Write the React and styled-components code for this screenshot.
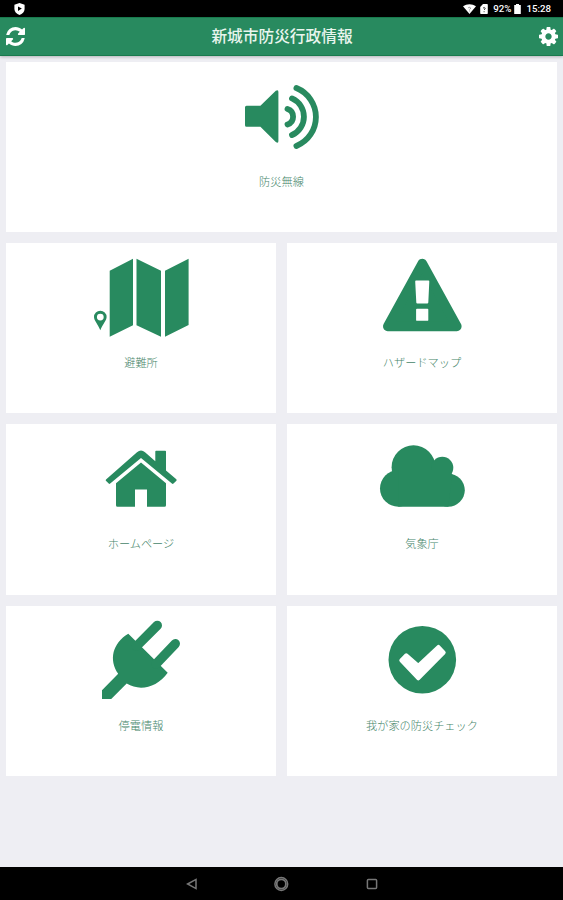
import styled, { createGlobalStyle } from "styled-components";

const GREEN = "#288a5f";

const menu = [
    { label: "防災無線", icon: <SpeakerIcon />, wide: true },
    { label: "避難所", icon: <MapIcon /> },
    { label: "ハザードマップ", icon: <WarningIcon /> },
    { label: "ホームページ", icon: <HomeIcon /> },
    { label: "気象庁", icon: <CloudIcon /> },
    { label: "停電情報", icon: <PlugIcon /> },
    { label: "我が家の防災チェック", icon: <CheckIcon /> },
];

export default function App() {
    return (
        <>
            <GlobalStyle />
            <Screen>
                <StatusBar />
                <Header>
                    <HeaderButton aria-label="更新">
                        <RefreshIcon />
                    </HeaderButton>
                    <Title>新城市防災行政情報</Title>
                    <HeaderButton aria-label="設定">
                        <CogIcon />
                    </HeaderButton>
                </Header>
                <Menu>
                    {menu.map(item => (
                        <Card key={item.label} $wide={item.wide}>
                            {item.icon}
                            <Label>{item.label}</Label>
                        </Card>
                    ))}
                </Menu>
                <NavBar />
            </Screen>
        </>
    )
}

function StatusBar() {
    return (
        <StatusRow>
            <svg width="11" height="12" viewBox="0 0 11 12">
                <path d="M5.5 0 10.6 1.8V6C10.6 8.8 8.3 10.9 5.5 12 2.7 10.9.4 8.8.4 6V1.8Z" fill="#fff" />
                <path d="M4 3.4 7.8 5.6 4 7.9Z" fill="#000" />
            </svg>
            <StatusGroup>
                <svg width="13" height="10" viewBox="0 0 13 10">
                    <path d="M0 2.3C3.8-.6 9.2-.6 13 2.3L6.5 10Z" fill="#fff" />
                    <path d="M5.2 3.8Q6.5 2.8 7.5 3.9 7.7 4.8 6.5 5.6M6.5 6.6V7.4" stroke="#777" strokeWidth=".8" fill="none" />
                </svg>
                <Sim width="8" height="10" viewBox="0 0 8 10">
                    <path d="M3 0H7Q7.8 0 7.8.8V9.2Q7.8 10 7 10H1Q.2 10 .2 9.2V3Z" fill="#fff" />
                    <path d="M3 4.1Q4.2 3 5.2 4.1 5.3 5 4.1 6M4.1 7.2V8.2" stroke="#444" strokeWidth="1" fill="none" />
                </Sim>
                <StatusText>92%</StatusText>
                <Battery width="7" height="10" viewBox="0 0 7 10">
                    <path d="M2 0H5V1H6.8V10H.2V1H2Z" fill="#fff" />
                </Battery>
                <StatusText>15:28</StatusText>
            </StatusGroup>
        </StatusRow>
    )
}

function NavBar() {
    return (
        <NavRow>
            <svg width="16" height="16" viewBox="0 0 16 16">
                <path d="M3.6 8 12 3.4V12.6Z" />
            </svg>
            <svg width="16" height="16" viewBox="0.7 0 16 16">
                <circle cx="8" cy="8" r="6.4" strokeWidth="1.5" />
                <circle cx="8" cy="8" r="4.6" strokeWidth="1.8" />
            </svg>
            <svg width="16" height="16" viewBox="0 0 16 16">
                <rect x="3.4" y="3.4" width="9.2" height="9" rx="1" />
            </svg>
        </NavRow>
    )
}

function RefreshIcon() {
    return (
        <svg width="19" height="19" viewBox="0 0 1536 1536" fill="currentColor">
            <path d="M1511 928q0 5-1 7-64 268-268 434.5t-478 166.5q-146 0-282.5-55t-243.5-157l-129 129q-19 19-45 19t-45-19-19-45v-448q0-26 19-45t45-19h448q26 0 45 19t19 45-19 45l-137 137q71 66 161 102t187 36q134 0 250-65t186-179q11-17 53-117 8-23 30-23h192q13 0 22.5 9.5t9.5 22.5zm25-800v448q0 26-19 45t-45 19h-448q-26 0-45-19t-19-45 19-45l138-138q-148-137-349-137-134 0-250 65t-186 179q-11 17-53 117-8 23-30 23h-199q-13 0-22.5-9.5t-9.5-22.5v-7q65-268 270-434.5t480-166.5q146 0 284 55.5t245 156.5l130-129q19-19 45-19t45 19 19 45z" />
        </svg>
    )
}

function CogIcon() {
    return (
        <svg width="19" height="19" viewBox="0 0 1536 1536" fill="currentColor">
            <path d="M1024 768q0-106-75-181t-181-75-181 75-75 181 75 181 181 75 181-75 75-181zm512-109v222q0 12-8 23t-20 13l-185 28q-19 54-39 91 35 50 107 138 10 12 10 25t-9 23q-27 37-99 108t-94 71q-12 0-26-9l-138-108q-44 23-91 38-16 136-29 186-7 28-36 28h-222q-14 0-24.5-8.5t-11.5-21.5l-28-184q-49-16-90-37l-141 107q-10 9-25 9-14 0-25-11-126-114-165-168-7-10-7-23 0-12 8-23 15-21 51-66.5t54-70.5q-27-50-41-99l-183-27q-13-2-21-12.5t-8-23.5v-222q0-12 8-23t19-13l186-28q14-46 39-92-40-57-107-138-10-12-10-24 0-10 9-23 26-36 98.5-107.5t94.5-71.5q13 0 26 10l138 107q44-23 91-38 16-136 29-186 7-28 36-28h222q14 0 24.5 8.5t11.5 21.5l28 184q49 16 90 37l142-107q9-9 24-9 13 0 25 10 129 119 165 170 7 8 7 22 0 12-8 23-15 21-51 66.5t-54 70.5q26 50 41 98l183 28q13 2 21 12.5t8 23.5z" />
        </svg>
    )
}

function SpeakerIcon() {
    return (
        <CardIcon viewBox="0.8 0 110 100">
            <path d="M20.3 43.7H34.2L49.6 28.8Q52.2 27 52.2 30V79Q52.2 82 49.6 80L34.2 64.7H20.3Q18.8 64.7 18.8 63.2V45.2Q18.8 43.7 20.3 43.7Z" />
            <Waves d="M61.3 47A8.1 8.1 0 0 1 61.3 62.4M65.8 36.4A20 20 0 0 1 65.8 73M70.2 26A31.3 31.3 0 0 1 70.2 84" />
        </CardIcon>
    )
}

function MapIcon() {
    return (
        <CardIcon viewBox="0 0 110 100">
            <path d="M23.7 27.7 47 15.7V82.3L23.7 93.7ZM50.5 15.7 75 27.7V93.7L50.5 82.3ZM79 27.7 102.6 15.7V82L79 93.7Z" />
            <path fillRule="evenodd" d="M14.3 67.7A6.3 6.3 0 0 1 20.6 74C20.6 77.5 16.8 81 14.3 87.2 11.8 81 8 77.5 8 74A6.3 6.3 0 0 1 14.3 67.7ZM14.3 70.7A3.4 3.4 0 1 0 14.3 77.5 3.4 3.4 0 1 0 14.3 70.7Z" />
        </CardIcon>
    )
}

function WarningIcon() {
    return (
        <CardIcon viewBox="0 0 110 100">
            <path d="M55.3 20.5 20.8 83.4H89.8Z" stroke={GREEN} strokeWidth="9.6" strokeLinejoin="round" />
            <path fill="#fff" d="M49 37.4H61.4Q62.4 37.4 62.3 38.4L61.3 59.5Q61.2 60.5 60.3 60.5H50.3Q49.3 60.5 49.3 59.5L48.2 38.4Q48.2 37.4 49 37.4ZM50 65.7H60.4Q61.3 65.7 61.3 66.6V76.9Q61.3 77.8 60.4 77.8H50Q49.1 77.8 49.1 76.9V66.6Q49.1 65.7 50 65.7Z" />
        </CardIcon>
    )
}

function HomeIcon() {
    return (
        <CardIcon viewBox="0 0 110 100">
            <path d="M55 38.6 30 59.2V81.2Q30 82.7 31.5 82.7H49V65.5H61V82.7H78.5Q80 82.7 80 81.2V59.2Z" />
            <path d="M20 55.4 51 28.3Q55 24.9 59 28.3L69.3 37.2V27.5Q69.3 26.7 70.1 26.7H79.2Q80 26.7 80 27.5V46.5L90.3 55.3Q91 56 90.4 56.7L87.5 59.6Q86.7 60.3 85.9 59.6L55 34 24.2 59.6Q23.4 60.3 22.7 59.6L19.9 56.7Q19.4 56 20 55.4Z" />
        </CardIcon>
    )
}

function CloudIcon() {
    return (
        <CardIcon viewBox="0 0 110 100">
            <circle cx="31.3" cy="64.4" r="18.3" />
            <circle cx="81.3" cy="66.2" r="16.5" />
            <circle cx="46.5" cy="43.2" r="21.9" />
            <circle cx="75.3" cy="43.7" r="11" />
            <path d="M31.3 46H81L85.4 50.3 81.3 82.7H31.3Z" />
        </CardIcon>
    )
}

function PlugIcon() {
    return (
        <CardIcon viewBox="0 0 110 100">
            <path d="M42.3 27.7 81.7 66.7C71 81.5 54 85.7 40.7 77.6L25.2 93H16V84.2L32.2 67.8C22.5 54 26.5 37 42.3 27.7Z" />
            <Prongs d="M50.5 40.3 71.3 19.4M70 58 89.3 37.7" />
        </CardIcon>
    )
}

function CheckIcon() {
    return (
        <CardIcon viewBox="0 0 110 100">
            <circle cx="55.3" cy="53.7" r="33.8" />
            <path d="M34.2 54.4 39.3 49.2 51.3 59.6 71.4 40.8 76.8 46.6 51.3 72.4Z" fill="#fff" stroke="#fff" strokeWidth="3.8" strokeLinejoin="round" />
        </CardIcon>
    )
}

const GlobalStyle = createGlobalStyle`
    * {
        box-sizing: border-box;
    }

    body {
        margin: 0;
        font-family: "Noto Sans CJK JP", "Noto Sans", sans-serif;
    }
`

const Screen = styled.div`
    width: 563px;
    height: 900px;

    display: flex;
    flex-direction: column;

    background-color: #eeeef3;
    overflow: hidden;
`

const StatusRow = styled.div`
    height: 17px;
    padding: 1px 12px 0 14px;
    flex-shrink: 0;

    display: flex;
    justify-content: space-between;
    align-items: center;

    background-color: #000;
`

const StatusGroup = styled.div`
    display: flex;
    align-items: center;
`

const Sim = styled.svg`
    margin: 0 5px 0 4px;
`

const Battery = styled.svg`
    margin: 0 5px 0 3px;
`

const StatusText = styled.span`
    font-family: Roboto, sans-serif;
    font-size: 9.7px;
    font-weight: 500;
    line-height: 12px;
    color: #fff;
`

const Header = styled.header`
    height: 39px;
    padding: 0 5px 0 6px;
    flex-shrink: 0;

    display: flex;
    justify-content: space-between;
    align-items: center;

    background-color: ${GREEN};
    border-top: 1px solid #187a4d;
    border-bottom: 1px solid #187a4d;
    box-shadow: 0 1px 3px rgba(0, 0, 0, 0.25);
`

const HeaderButton = styled.button`
    padding: 0;
    border: none;
    background: none;

    display: flex;

    color: #fff;
`

const Title = styled.h1`
    margin: 0 0 2px;

    font-size: 15.7px;
    font-weight: 500;
    line-height: 24px;
    color: #e9f5ee;
`

const Menu = styled.main`
    padding: 6px 6px 0 6px;
    flex: 1;

    display: grid;
    grid-template-columns: 1fr 1fr;
    grid-auto-rows: 170.2px;
    align-content: start;
    gap: 11px;
`

const Card = styled.section`
    grid-column: ${(props) => props.$wide ? "1 / -1" : "auto"};

    display: flex;
    flex-direction: column;
    align-items: center;

    background-color: #fff;
`

const CardIcon = styled.svg`
    width: 110px;
    height: 100px;
    flex-shrink: 0;

    fill: ${GREEN};
`

const Waves = styled.path`
    fill: none;
    stroke: ${GREEN};
    stroke-width: 5.8px;
    stroke-linecap: round;
`

const Prongs = styled.path`
    stroke: ${GREEN};
    stroke-width: 9.4px;
    stroke-linecap: round;
`

const Label = styled.span`
    margin-top: 11px;

    font-size: 11.2px;
    font-weight: 300;
    line-height: 16px;
    color: #46866a;
`

const NavRow = styled.nav`
    height: 33px;
    padding: 0 183.5px 0 184px;
    flex-shrink: 0;

    display: flex;
    justify-content: space-between;
    align-items: center;

    background-color: #000;

    svg {
        fill: none;
        stroke: #777;
        stroke-width: 1.5px;
    }
`
